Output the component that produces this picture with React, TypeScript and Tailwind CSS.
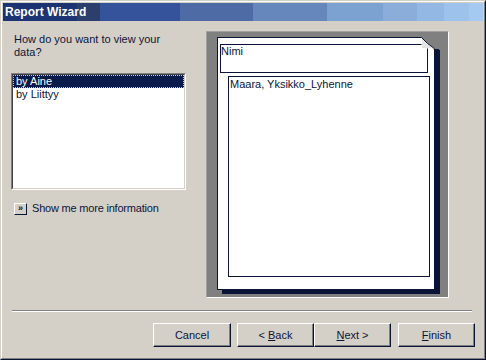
import React from 'react';

const ink = 'text-[#0c1538]';

const WizardButton: React.FC<{ children: React.ReactNode; className?: string }> = ({ children, className = '' }) => (
    <button
        className={`h-[24px] w-[77px] bg-[#d4d0c8] border-t border-l border-white border-r border-b border-r-[#0a1436] border-b-[#0a1436] shadow-[inset_-1px_-1px_0_#808080] flex items-center justify-center text-[11px] ${ink} ${className}`}
    >
        {children}
    </button>
);

export default function App() {
    return (
        <div className="w-[486px] h-[360px] font-['Liberation_Sans',Arial,sans-serif] text-[11px] leading-[13px] border-t border-l border-[#d4d0c8] border-r border-b border-r-[#0a1436] border-b-[#0a1436] bg-[#d4d0c8]">
            <div className="h-full flex flex-col border-t border-l border-white border-r border-b border-r-[#808080] border-b-[#808080] p-[1px]">
                {/* title bar */}
                <div className="h-[18px] shrink-0 pl-[2px] text-white font-bold text-[12px] leading-[18px] bg-[linear-gradient(to_right,#1c3473_74px,#2c3e6c_74px,#2c3e6c_97px,#34539a_97px,#34539a_177px,#4e6ba6_177px,#4e6ba6_250px,#6587bc_250px,#6587bc_324px,#7ba2d1_324px,#7ba2d1_380px,#8badd9_380px,#8badd9_414px,#93b8e4_414px,#93b8e4_441px,#9dc2ec_441px,#9dc2ec_466px,#a6c9f1_466px)]">
                    Report Wizard
                </div>

                <div className="flex-1 flex flex-col">
                    <div className="flex pt-[10px] pl-[8px]">
                        {/* left column */}
                        <div className="w-[175px] flex flex-col">
                            <p className={`mt-[2px] pl-[3px] ${ink}`}>
                                How do you want to view your
                                <br />
                                data?
                            </p>
                            <div className="mt-[14px] h-[117px] border-t border-l border-[#808080] border-r border-b border-r-white border-b-white">
                                <div className="h-full bg-white border-t border-l border-[#404040] border-r border-b border-r-[#d4d0c8] border-b-[#d4d0c8]">
                                    <div className="h-[13px] bg-[#0a1a4a] text-white pl-[2px] border border-dotted border-[#c8c8c8] leading-[11px]">
                                        by Aine
                                    </div>
                                    <div className={`h-[13px] pl-[3px] ${ink}`}>by Liittyy</div>
                                </div>
                            </div>
                            <div className="mt-[12px] flex items-center pl-[3px]">
                                <span className="w-[13px] h-[12px] bg-[#d4d0c8] border-t border-l border-white border-r border-b border-r-[#0a1436] border-b-[#0a1436] flex items-center justify-center text-[9px] leading-[9px] font-bold text-[#0a1436]">
                                    »
                                </span>
                                <span className={`ml-[5px] tracking-[-0.2px] ${ink}`}>Show me more information</span>
                            </div>
                        </div>

                        {/* preview panel */}
                        <div className="ml-[20px] w-[243px] h-[267px] bg-[#808080] border-t border-l border-[#a0a0a0] border-r border-b border-r-white border-b-white">
                            <div className="relative ml-[10px] mt-[5px] w-[218px] h-[253px] bg-white border border-[#0a1436] shadow-[5px_4px_0_#0a1436]">
                                <div className={`ml-[2px] mt-[6px] w-[208px] h-[29px] border border-[#0a1436] ${ink}`}>Nimi</div>
                                <div className={`ml-[10px] mt-[3px] w-[202px] h-[201px] border border-[#0a1436] pl-[1px] pt-[1px] ${ink}`}>
                                    Maara, Yksikko_Lyhenne
                                </div>
                                <svg className="absolute -top-[1px] -right-[6px]" width="19" height="13" viewBox="0 0 19 13">
                                    <polygon points="0,0 19,0 19,13 13,13" fill="#808080" />
                                    <path d="M0.5 0.5 L0.5 11.5 L13.5 11.5 Q 6 7 0.5 0.5 Z" fill="#ffffff" />
                                    <path d="M1 2 Q 6 8 12 11 L1 11 Z" fill="#e4e4e4" />
                                    <path d="M0.5 0.5 Q 6 7 13.5 11.5" fill="none" stroke="#0a1436" strokeWidth="1" />
                                    <rect x="13" y="12" width="5" height="1" fill="#0a1436" />
                                </svg>
                            </div>
                        </div>
                    </div>

                    {/* separator */}
                    <div className="mt-[12px] ml-[9px] mr-[11px] border-t border-[#808080] border-b border-b-white" />

                    {/* buttons */}
                    <div className="mt-[11px] flex justify-end pr-[8px]">
                        <WizardButton className="w-[78px]">Cancel</WizardButton>
                        <WizardButton className="ml-[6px]">
                            &lt; <span className="underline ml-[3px]">B</span>ack
                        </WizardButton>
                        <WizardButton>
                            <span className="underline">N</span>ext &gt;
                        </WizardButton>
                        <WizardButton className="ml-[7px]">
                            <span className="underline">F</span>inish
                        </WizardButton>
                    </div>
                </div>
            </div>
        </div>
    );
}
